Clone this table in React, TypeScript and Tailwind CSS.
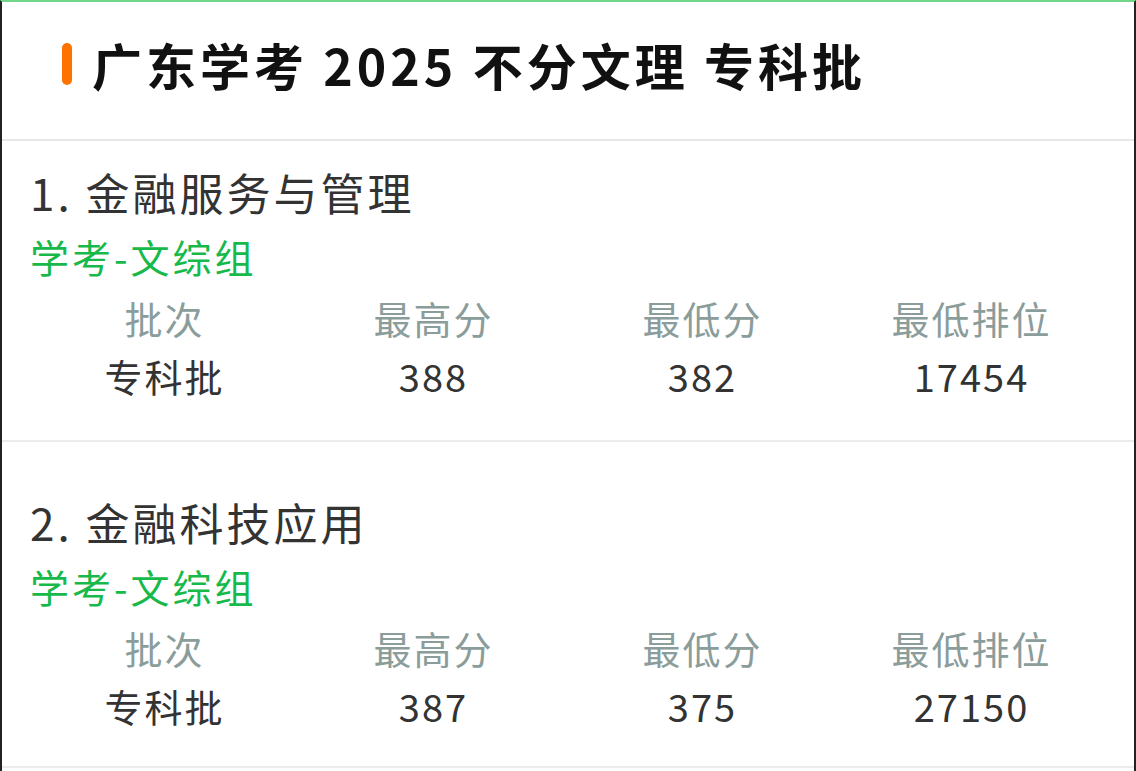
import React from 'react';

const font = { fontFamily: '"Noto Sans CJK SC", "Noto Sans", sans-serif' };

const majors = [
  { name: '1. 金融服务与管理', group: '学考-文综组', values: ['专科批', '388', '382', '17454'], box: 'pt-[21px] pb-[34px]' },
  { name: '2. 金融科技应用', group: '学考-文综组', values: ['专科批', '387', '375', '27150'], box: 'pt-[50px] pb-[30px]' },
];

const heads = ['批次', '最高分', '最低分', '最低排位'];

export default function App() {
  return (
    <div style={font} className="w-[1136px] h-[771px] bg-white border-t-2 border-t-[#6fd68a] border-l-2 border-l-[#222] border-r-2 border-r-[#222] overflow-hidden">
      <header className="h-[139px] flex items-center pb-[14px] pl-[60px] gap-[20px] border-b-2 border-[#e8e8e8]">
        <span className="w-[10px] h-[42px] rounded-full bg-[#ff7200]" />
        <h1 className="text-[50px] font-bold text-[#111] tracking-[4px] leading-none">广东学考 2025 不分文理 专科批</h1>
      </header>

      {majors.map((m, i) => (
        <section key={i} className={`${m.box} border-b-2 border-[#ececec]`}>
          <div className="pl-[28px] text-[44px] tracking-[3px] leading-[60px] text-[#333]">{m.name}</div>
          <div className="pl-[28px] text-[39px] tracking-[3px] leading-[68px] text-[#16b94a]">{m.group}</div>
          <div className="grid grid-cols-4 px-[28px] text-center">
            {heads.map((h) => (
              <div key={h} className="text-[38px] tracking-[2px] leading-[56px] text-[#8a9d9b]">{h}</div>
            ))}
            {m.values.map((v, j) => (
              <div key={j} className="text-[38px] tracking-[2px] leading-[60px] text-[#333]">{v}</div>
            ))}
          </div>
        </section>
      ))}
    </div>
  );
}
